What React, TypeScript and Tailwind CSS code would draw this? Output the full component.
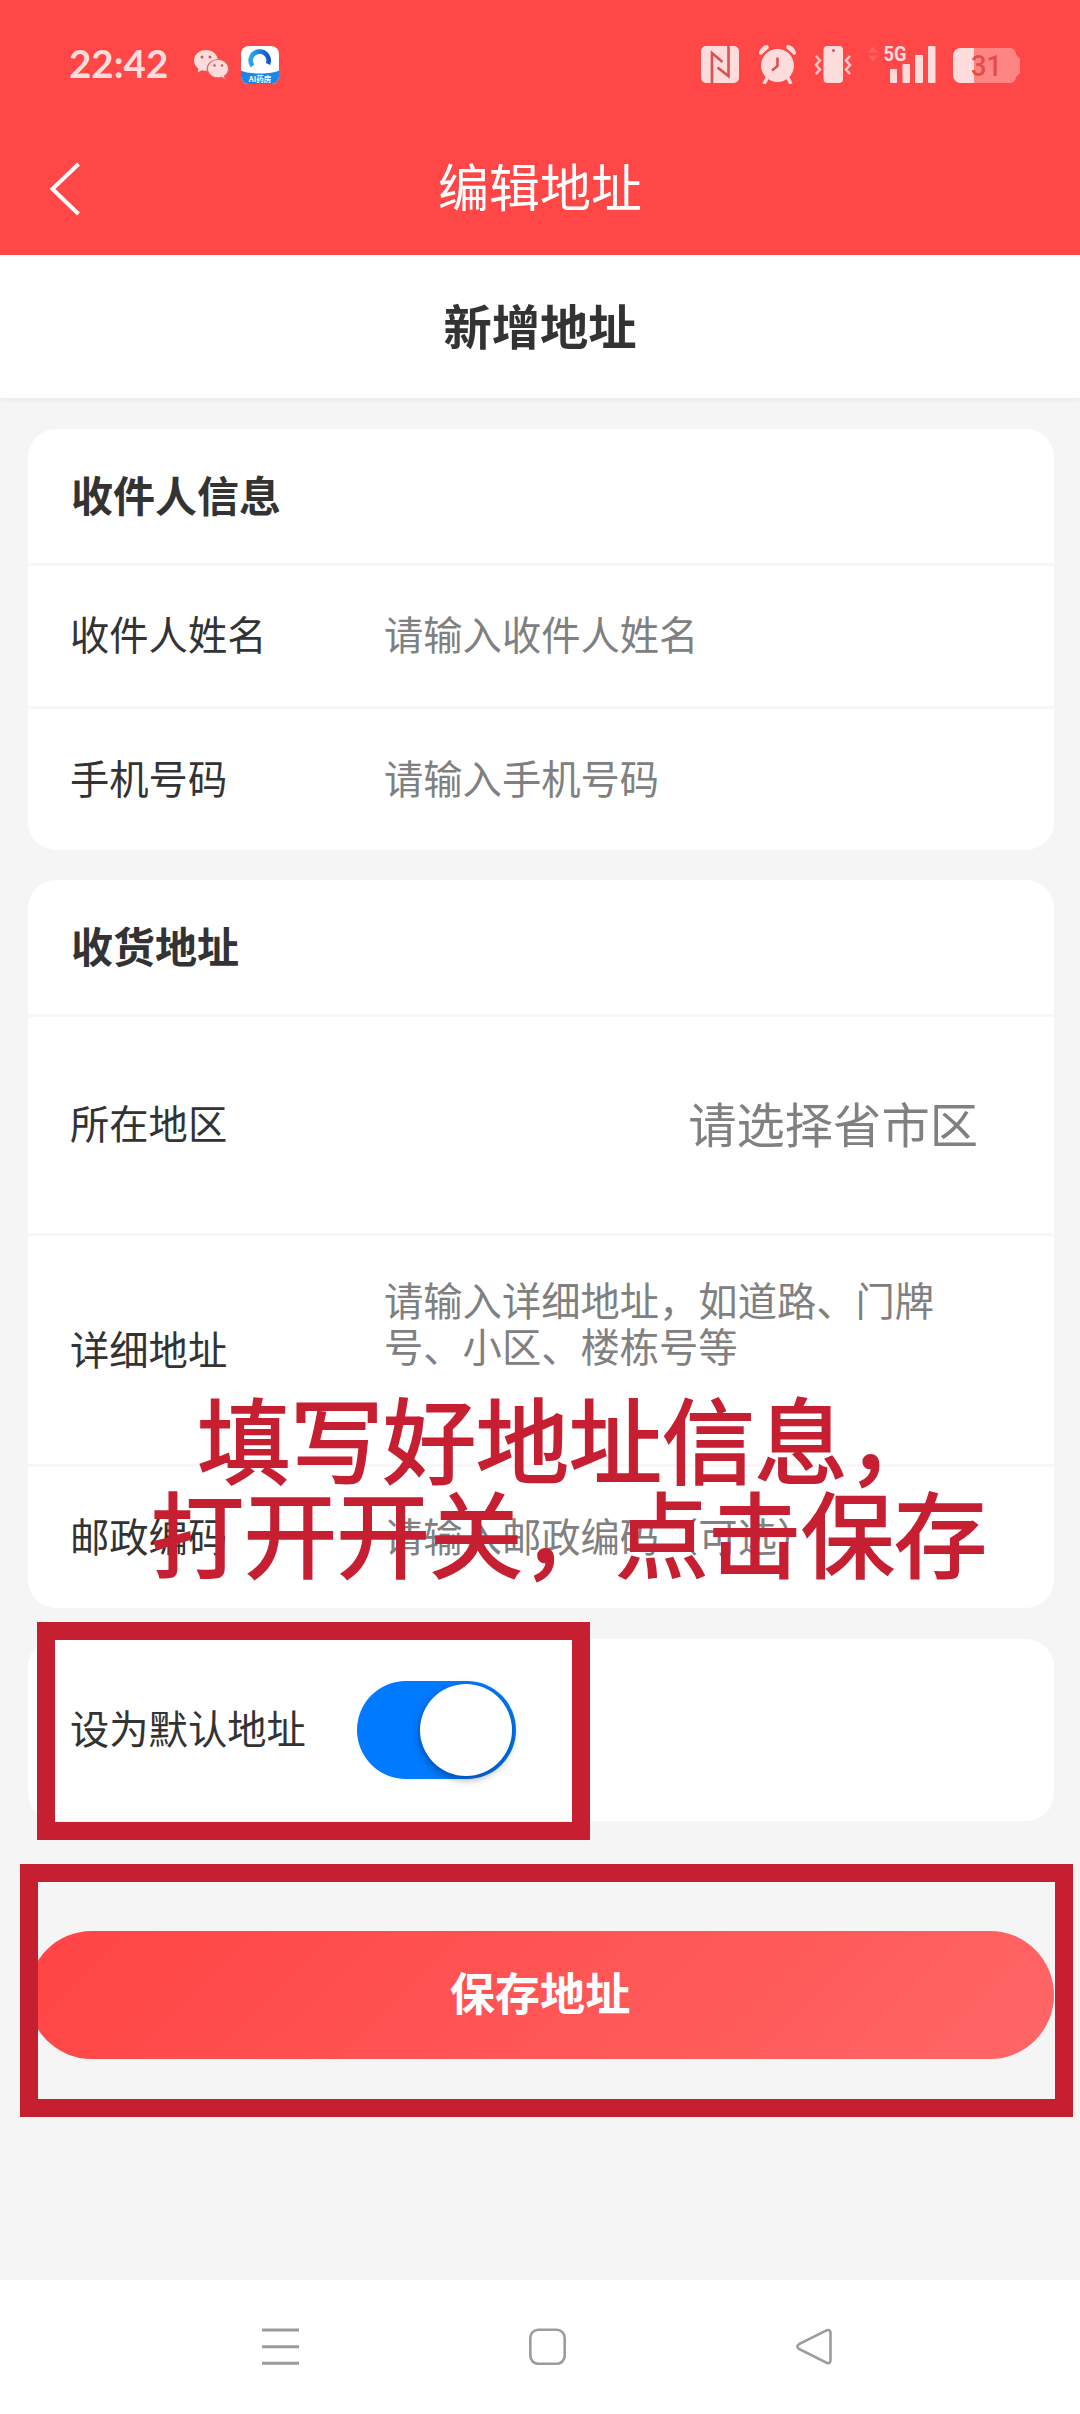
import type { ReactNode } from 'react'

type RowProps = {
  label: string
  placeholder: string
  className: string
}

const StatusBar = () => {
  return (
    <div className="flex h-[120px] items-start justify-between pl-[69px] pr-[60px] pt-[45px]">
      {/* clock + notifications */}
      <div className="flex items-start">
        <span className="-mt-px w-[125px] font-['Lato','Noto_Sans_CJK_SC',sans-serif] text-[38.500px] leading-[38px] font-bold text-[#ffdcdc]">
          22:42
        </span>
        <svg className="mt-1 h-[32px] w-[36px]" viewBox="0 0 36 32">
          <path
            d="M12 1C5.400 1 0 5.600 0 11.500c0 3.400 1.700 6.200 4.400 8.200L3.600 23.500l4.300-2.300c1.300.4 2.700.6 4.100.6 6.600 0 12-4.600 12-10.300S18.600 1 12 1z"
            fill="#ffdcdc"
          />
          <path
            d="M24 10.500c-6 0-10.700 4-10.700 9.100s4.700 9.200 10.700 9.200c1.300 0 2.500-.2 3.600-.5l3.700 2.200-.8-3.600c2.500-1.700 4.100-4.300 4.100-7.300 0-5.100-4.700-9.100-10.600-9.100z"
            fill="#ffdcdc"
            stroke="#e56464"
            strokeWidth="1.200"
          />
          <g fill="#c95b5b">
            <circle cx="8" cy="8" r="1.500" />
            <circle cx="16" cy="8" r="1.500" />
            <circle cx="20.500" cy="16.500" r="1.300" />
            <circle cx="28" cy="16.500" r="1.300" />
          </g>
        </svg>
        <svg className="ml-[11px] mt-px h-[38px] w-[38px]" viewBox="0 0 38 38">
          <defs>
            <clipPath id="appClip">
              <rect width="38" height="38" rx="8" />
            </clipPath>
            <linearGradient id="ring" x1="0" x2="1">
              <stop offset="0" stopColor="#2fa4ee" />
              <stop offset="1" stopColor="#1257c8" />
            </linearGradient>
          </defs>
          <g clipPath="url(#appClip)">
            <rect width="38" height="38" fill="#fff" />
            <path d="M0 24.500c6 4 32 4 38 0V38H0z" fill="#1b86e8" />
            <path d="M11.500 20a9 9 0 1 1 15.500-2" fill="none" stroke="url(#ring)" strokeWidth="4.600" />
            <text x="19" y="36" fontSize="7.500" fontWeight="700" fill="#fff" textAnchor="middle" fontFamily="Noto Sans CJK SC, sans-serif">
              AI药房
            </text>
          </g>
        </svg>
      </div>

      {/* system icons */}
      <svg className="h-[39px] w-[319px]" viewBox="701 45 319 39">
        <g fill="#ffdcdc">
          {/* nfc */}
          <rect x="701" y="46" width="38" height="37" rx="5" />
          {/* alarm */}
          <circle cx="777.500" cy="65.500" r="16.500" />
          <path d="M759 54c0-5 4-9 9-9l1 3-8 7zM796 54c0-5-4-9-9-9l-1 3 8 7z" />
          <path d="M767 78l-3 6M788 78l3 6" stroke="#ffdcdc" strokeWidth="3.500" />
          {/* vibrate */}
          <rect x="823.500" y="46" width="19.500" height="37" rx="4" />
          {/* signal */}
          <rect x="890" y="69" width="7" height="14" rx="1" />
          <rect x="902.500" y="64" width="7.500" height="19" rx="1" />
          <rect x="915" y="55" width="8" height="28" rx="1" />
          <rect x="928" y="46" width="7.500" height="37" rx="1" />
          <text x="883.500" y="61" fontSize="20" fontWeight="700" textLength="23" lengthAdjust="spacingAndGlyphs" fontFamily="Roboto, sans-serif">
            5G
          </text>
        </g>
        <g fill="none" stroke="#dc5050" strokeWidth="2.600">
          <path d="M712 83V53l10.500 9M728.500 46v30l-11-8.500" />
          <path d="M777.500 57.500V66l-5.500 4.500" />
        </g>
        <circle cx="833.500" cy="50.500" r="1.500" fill="#d95050" />
        <path d="M816 56l4 4.500-4 4.500 4 4.500-4 4.500M850 56l-4 4.500 4 4.500-4 4.500 4 4.500" fill="none" stroke="#ffc4c4" strokeWidth="2.600" />
        <path d="M868 52.500l5-6 5 6zM868 55.500l5 6 5-6z" fill="#ff6161" />
        {/* battery */}
        <path d="M961 48h49a6 6 0 0 1 6 6l4 5v14l-4 4a6 6 0 0 1-6 6h-49a8 8 0 0 1-8-8V56a8 8 0 0 1 8-8z" fill="#ff8585" />
        <path d="M974 48h-13a8 8 0 0 0-8 8v19a8 8 0 0 0 8 8h13z" fill="#ffdcdc" />
        <text x="971" y="75.500" fontSize="30" fontWeight="500" fill="#e94a4a" textLength="31" lengthAdjust="spacingAndGlyphs" fontFamily="Roboto, sans-serif">
          31
        </text>
      </svg>
    </div>
  )
}

const Card = ({ children, className }: { children: ReactNode; className: string }) => {
  return <div className={`ml-[28px] w-[1026px] rounded-[28px] bg-white ${className}`}>{children}</div>
}

const CardTitle = ({ title }: { title: string }) => {
  return (
    <div className="flex h-[137px] items-center border-b-[3px] border-[#f7f7f7] pl-[43px]">
      <h2 className="-mt-1 text-[42px] leading-[60px] font-bold">{title}</h2>
    </div>
  )
}

const Row = ({ label, placeholder, className }: RowProps) => {
  return (
    <div className={`flex items-center pl-[42px] text-[39.300px] leading-[46px] ${className}`}>
      <span className="-mt-[6px] w-[314px]">{label}</span>
      <span className="-mt-[6px] text-[#808080]">{placeholder}</span>
    </div>
  )
}

const NavBar = () => {
  return (
    <div className="flex h-[134px] items-start bg-white pl-[262px] pt-[48px]">
      <svg className="h-[37px] w-[37px]" viewBox="0 0 37 37" stroke="#9c9c9c" strokeWidth="3">
        <path d="M0 2h37M0 18.700h37M0 35.300h37" />
      </svg>
      <svg className="ml-[230px] h-[37px] w-[37px]" viewBox="0 0 37 37" fill="none" stroke="#9c9c9c" strokeWidth="2.600">
        <rect x="1.300" y="1.800" width="34.400" height="34" rx="8" />
      </svg>
      <svg className="ml-[230px] h-[37px] w-[37px]" viewBox="0 0 37 37" fill="none" stroke="#9c9c9c" strokeWidth="2.600">
        <path d="M31 2.200L3 16.200q-3.200 2.300 0 4.800L31 35q3.500.8 3.500-3V5.200q0-3.800-3.500-3z" />
      </svg>
    </div>
  )
}

const App = () => {
  return (
    <div className="relative flex h-[2414px] w-[1080px] flex-col overflow-hidden bg-[#f5f5f5] font-['Noto_Sans_CJK_SC',sans-serif] text-[#333333]">
      {/* header */}
      <header className="h-[255px] bg-[#ff4747]">
        <StatusBar />
        <div className="flex h-[135px] items-center pl-[49px]">
          <svg className="mt-[3px] h-[54px] w-[32px]" viewBox="0 0 32 54" fill="none" stroke="#fff" strokeWidth="4">
            <path d="M29.500 2L3.500 27l26 25" />
          </svg>
          <h1 className="-mt-[5px] ml-[357px] text-[51px] leading-[70px] text-white">编辑地址</h1>
        </div>
      </header>

      <div className="flex h-[143px] shrink-0 items-center justify-center bg-white shadow-[0_2px_6px_rgba(0,0,0,0.05)]">
        <h2 className="-mt-[6px] text-[48.300px] leading-[70px] font-bold">新增地址</h2>
      </div>

      <Card className="mt-[31px] h-[421px]">
        <CardTitle title="收件人信息" />
        <Row label="收件人姓名" placeholder="请输入收件人姓名" className="h-[143px] border-b-[3px] border-[#f7f7f7]" />
        <Row label="手机号码" placeholder="请输入手机号码" className="h-[141px]" />
      </Card>

      <Card className="mt-[30px] h-[728px]">
        <CardTitle title="收货地址" />
        <div className="flex h-[219px] items-center justify-between border-b-[3px] border-[#f7f7f7] pl-[42px] pr-[76px]">
          <span className="-mt-[6px] text-[39.300px] leading-[60px]">所在地区</span>
          <span className="-mt-[6px] text-[48.300px] leading-[60px] text-[#808080]">请选择省市区</span>
        </div>
        <div className="flex h-[231px] border-b-[3px] border-[#f7f7f7] pl-[42px] text-[39.300px] leading-[46px]">
          <span className="mt-[89px] w-[314px]">详细地址</span>
          <p className="mt-[40px] w-[570px] text-[#808080]">
            请输入详细地址，如道路、门牌
            <br />
            号、小区、楼栋号等
          </p>
        </div>
        <Row label="邮政编码" placeholder="请输入邮政编码（可选）" className="h-[141px]" />
      </Card>

      <Card className="mt-[31px] flex h-[182px] items-center pl-[42px]">
        <span className="-mt-[6px] w-[287px] text-[39.300px] leading-[60px]">设为默认地址</span>
        <div className="flex h-[98px] w-[159px] items-center justify-end rounded-full bg-[#007aff] pr-[4px]">
          <div className="h-[92px] w-[92px] rounded-full bg-white shadow-[0_3px_8px_rgba(0,0,0,0.4)]" />
        </div>
      </Card>

      <button className="mt-[110px] ml-[28px] h-[128px] w-[1026px] shrink-0 rounded-full bg-[linear-gradient(135deg,#ff4444,#ff6666)] pr-[2px] pb-[6px] text-[45.200px] font-bold text-white">
        保存地址
      </button>

      <div className="mt-auto">
        <NavBar />
      </div>

      {/* guide marks */}
      <div className="absolute top-[1622px] left-[37px] h-[218px] w-[553px] border-[18px] border-[#c71f32]" />
      <div className="absolute top-[1864px] left-[20px] h-[253px] w-[1053px] border-[18px] border-[#c71f32]" />
      <p className="absolute top-[1390px] left-[69px] w-[1000px] text-center text-[92.900px] leading-[94px] whitespace-nowrap text-[#c71f32] [-webkit-text-stroke:2px_#c71f32]">
        填写好地址信息，
        <br />
        打开开关，点击保存
      </p>
    </div>
  )
}

export default App
